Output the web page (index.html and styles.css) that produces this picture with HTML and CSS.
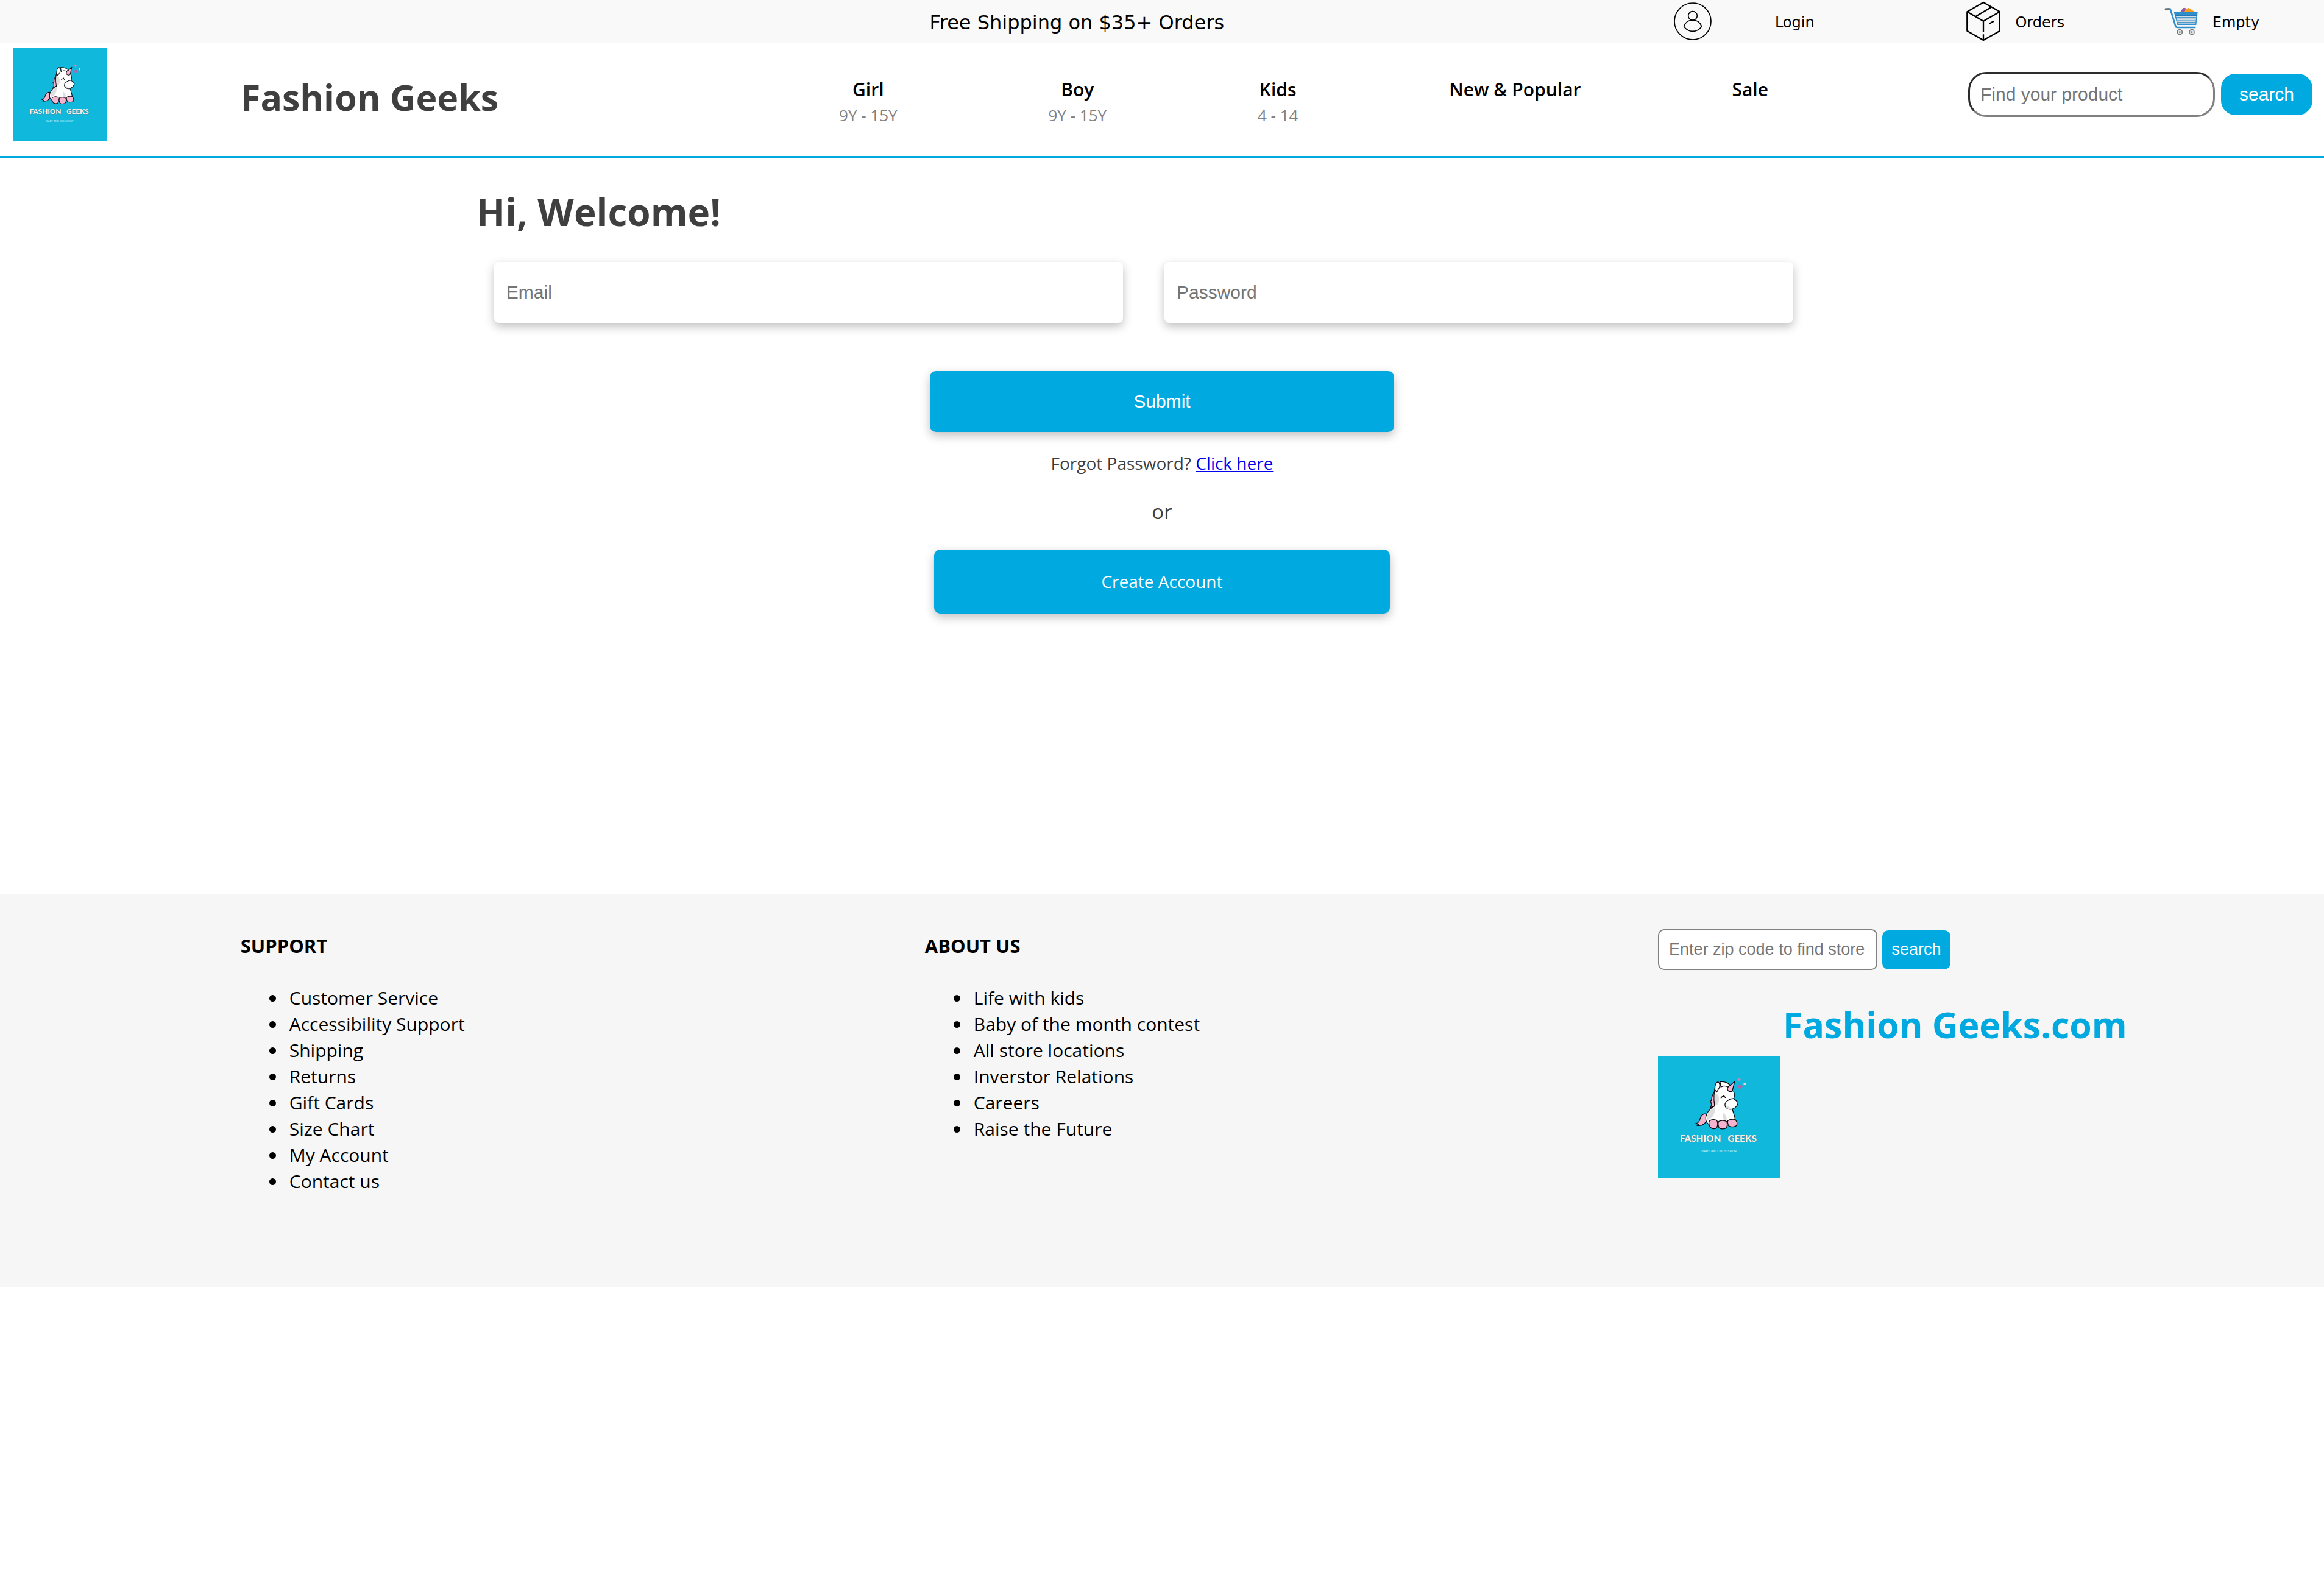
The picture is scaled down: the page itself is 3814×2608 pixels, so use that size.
FILE: index.html
```html
<!DOCTYPE html>
<html lang="en">
<head>
<meta charset="utf-8">
<meta name="viewport" content="width=device-width, initial-scale=1">
<title>Fashion Geeks</title>
<link rel="stylesheet" href="styles.css">
</head>
<body>
<header>
  <div class="topbar">
    <p class="promo">Free Shipping on $35+ Orders</p>
    <a class="account account-login" href="#">
      <svg width="62" height="62" viewBox="37 12 186 186" fill="none" stroke="#000" stroke-width="5" aria-hidden="true">
        <circle cx="130" cy="105" r="90"/>
        <circle cx="130" cy="78" r="22"/>
        <path stroke-linejoin="round" d="M87 131C92 112 108 99 130 99C152 99 168 112 174 131C150 162 110 162 87 131Z"/>
      </svg>
      <span>Login</span>
    </a>
    <a class="account" href="#">
      <svg width="56" height="66" viewBox="34 6 168 198" fill="none" stroke="#000" stroke-width="7" stroke-linejoin="round" aria-hidden="true">
        <path d="M118 12L199 58V152L118 198L38 152V58Z"/>
        <path d="M38 58L118 104L199 58M118 104V157M118 169V198M157 35L79 82"/>
        <path d="M147 117L169 104"/>
      </svg>
      <span>Orders</span>
    </a>
    <a class="account" href="#">
      <svg width="55" height="46" viewBox="1006 36 165 138" aria-hidden="true">
        <path fill="#935ba6" d="M1082 62L1096 42Q1104 35 1112 42L1106 62Z"/>
        <path fill="#f59c1f" d="M1100 62L1118 42Q1124 36 1131 42L1162 62Z"/>
        <path fill="#2f8fcd" d="M1053 60H1170L1163 123H1070Z"/>
        <path fill="#2377b3" d="M1058 72H1169L1168 78H1060Z"/>
        <path fill="#d5dde3" d="M1063 80H1163L1159 116H1073Z"/>
        <path stroke="#2f8fcd" stroke-width="3" d="M1064 86H1163M1067 94H1162M1069 102H1161M1071 110H1160"/>
        <path fill="none" stroke="#2f8fcd" stroke-width="8" stroke-linejoin="round" d="M1024 44H1035L1061 128Q1063 135 1070 135H1160"/>
        <path stroke="#6b6b6b" stroke-width="9" stroke-linecap="round" d="M1012 44H1024"/>
        <g fill="#e4e4e4" stroke="#777" stroke-width="5"><circle cx="1082" cy="158" r="12"/><circle cx="1141" cy="158" r="12"/></g>
        <g fill="#2f8fcd"><circle cx="1082" cy="158" r="4"/><circle cx="1141" cy="158" r="4"/></g>
      </svg>
      <span>Empty</span>
    </a>
  </div>

  <div class="masthead">
    <a class="masthead-logo" href="#" aria-label="Home">
      <svg viewBox="64 38 601 601">
        <g id="logo">
          <rect x="64" y="38" width="601" height="601" fill="#10b8db"/>
          <g stroke="#0b0b0f" stroke-width="4" stroke-linejoin="round" stroke-linecap="round">
            <path fill="#f6b3d0" d="M344 212C332 232 324 248 329 258L321 262C330 272 330 282 322 294L350 282Z"/>
            <path fill="#f6b3d0" d="M300 324C282 322 274 338 271 350C268 364 262 370 250 371L264 376L256 381C280 384 294 378 303 358Z"/>
            <path fill="#fff" d="M346 284C312 300 296 332 300 354C302 366 308 372 318 378L440 380C452 368 444 340 430 300L420 270Z"/>
            <path fill="#fff" stroke="none" d="M346 290C338 250 342 210 349 190L372 186C390 176 414 184 428 202C440 218 440 236 438 250C456 258 462 266 458 272C450 290 436 303 420 302C404 300 396 292 394 280L380 300Z"/>
            <path fill="none" d="M343 285C338 250 340 210 347 190"/>
            <path fill="#fff" d="M370 166C388 164 402 166 418 180L410 192C396 184 386 184 374 192Z"/>
            <path fill="#fff" d="M345 205C343 185 350 168 360 166C370 172 372 190 362 202L353 217Z"/>
            <path fill="#f6b3d0" d="M407 204C404 194 412 188 420 184L442 164L430 213C420 216 410 214 407 204Z"/>
            <path fill="none" d="M437 212C442 226 441 238 438 248"/>
            <path fill="#fff" d="M436 248L458 266C460 280 444 300 422 302C408 302 394 292 394 280C394 266 412 250 436 248Z"/>
            <path fill="none" stroke-width="5" d="M375 245C380 236 390 234 396 243M385 238L390 234"/>
          </g>
          <g fill="#dedede">
            <path d="M344 222C360 224 368 240 364 262C360 278 352 284 346 282C342 262 342 240 344 222Z"/>
            <path d="M345 290C348 316 338 344 308 356C298 340 314 306 345 290Z"/>
            <path d="M386 320C400 330 406 342 401 356L388 354C384 342 384 330 386 320Z"/>
            <path d="M397 282C406 286 416 284 422 300C410 302 400 296 397 282Z"/>
          </g>
          <g fill="#f6b3d0" stroke="#0b0b0f" stroke-width="4">
            <path d="M315 362C324 350 350 350 356 360C360 374 358 390 350 395C340 399 326 397 320 388C316 380 314 370 315 362Z"/>
            <path d="M362 362C372 354 398 356 404 364C408 378 404 392 396 396C384 400 370 398 365 392C361 384 360 372 362 362Z"/>
            <path d="M408 358C418 350 442 348 448 356C456 366 456 378 448 384C438 390 422 390 414 384C408 376 407 366 408 358Z"/>
          </g>
          <path fill="#dc7cb8" d="M465 144Q467 153 475 155Q467 157 465 166Q463 157 454 155Q463 153 465 144Z"/>
          <path fill="#f6cfe0" d="M492 166Q494 174 500 176Q494 178 492 186Q490 178 484 176Q490 174 492 166Z"/>
          <path fill="#a86cae" d="M467 172Q471 187 485 190Q471 193 467 208Q463 193 450 190Q463 187 467 172Z"/>
          <g class="logo-name">
            <text x="172" y="462">FASHION</text>
            <text x="408" y="462">GEEKS</text>
          </g>
          <text class="logo-tag" x="365" y="513" text-anchor="middle">BABY AND KIDS SHOP</text>
        </g>
      </svg>
    </a>
    <p class="brand">Fashion Geeks</p>
    <nav class="menu">
      <a href="#"><b>Girl</b><small>9Y - 15Y</small></a>
      <a href="#"><b>Boy</b><small>9Y - 15Y</small></a>
      <a href="#"><b>Kids</b><small>4 - 14</small></a>
      <a href="#"><b>New &amp; Popular</b></a>
      <a href="#"><b>Sale</b></a>
    </nav>
    <form class="search">
      <input type="text" placeholder="Find your product" aria-label="Find your product">
      <button type="button">search</button>
    </form>
  </div>
</header>

<main class="login">
  <h1>Hi, Welcome!</h1>
  <form class="login-form">
    <div class="fields">
      <input type="email" placeholder="Email" aria-label="Email">
      <input type="password" placeholder="Password" aria-label="Password">
    </div>
    <button class="submit" type="button">Submit</button>
  </form>
  <p class="forgot">Forgot Password? <a href="#">Click here</a></p>
  <p class="or">or</p>
  <a class="create" href="#">Create Account</a>
</main>

<footer class="footer">
  <section class="links">
    <h2>SUPPORT</h2>
    <ul>
      <li>Customer Service</li>
      <li>Accessibility Support</li>
      <li>Shipping</li>
      <li>Returns</li>
      <li>Gift Cards</li>
      <li>Size Chart</li>
      <li>My Account</li>
      <li>Contact us</li>
    </ul>
  </section>
  <section class="links">
    <h2>ABOUT US</h2>
    <ul>
      <li>Life with kids</li>
      <li>Baby of the month contest</li>
      <li>All store locations</li>
      <li>Inverstor Relations</li>
      <li>Careers</li>
      <li>Raise the Future</li>
    </ul>
  </section>
  <section class="store">
    <form class="zip">
      <input type="text" placeholder="Enter zip code to find store" aria-label="Enter zip code to find store">
      <button type="button">search</button>
    </form>
    <p class="site">Fashion Geeks.com</p>
    <svg class="footer-logo" viewBox="64 38 601 601" role="img" aria-label="Fashion Geeks logo"><use href="#logo"/></svg>
  </section>
</footer>
</body>
</html>
```
FILE: styles.css
```css
* { box-sizing: border-box; }

body {
  margin: 0;
  background: #fff;
  color: #000;
  font-family: "Open Sans", "Noto Sans", sans-serif;
}

h1, h2, p, ul { margin: 0; }
a { color: inherit; text-decoration: none; }
svg { display: block; }
input, button { font-family: "Liberation Sans", Arial, sans-serif; }
input::placeholder { color: #757575; }

button {
  border: 0;
  padding: 0;
  background: #00a9e0;
  color: #fff;
}

.logo-name {
  font: 900 46px Lato, sans-serif;
  fill: #fdeee0;
  filter: drop-shadow(2px 3px 0 #4f8fa8);
}
.logo-tag { font: 16px "DejaVu Sans", sans-serif; fill: #d5f1f5; }

/* Top bar */
.topbar {
  display: grid;
  grid-template-columns: 610fr 240fr 162fr 131fr;
  align-items: center;
  height: 70px;
  padding-left: 40%;
  background: #f9f9f9;
  font-family: "DejaVu Sans", Verdana, sans-serif;
}
.promo { padding-top: 4px; font-size: 32px; }
.account {
  display: flex;
  align-items: center;
  gap: 24px;
  font-size: 24px;
}
.account span { padding-top: 4px; }
.account-login { gap: 104px; }

/* Masthead */
.masthead {
  display: flex;
  align-items: center;
  padding: 8px 19px 24px 21px;
  border-bottom: 3px solid #00a9e0;
}
.masthead-logo svg { width: 154px; height: 154px; }
.brand {
  margin-left: 220px;
  padding-top: 8px;
  color: #3f3f3f;
  font-size: 59px;
  font-weight: 700;
  line-height: 80px;
}
.menu {
  display: flex;
  align-items: flex-start;
  gap: 6.5vw;
  margin-left: auto;
  padding-top: 24px;
  text-align: center;
}
.menu b {
  display: block;
  font-size: 30px;
  font-weight: 600;
  line-height: 44px;
}
.menu small {
  display: block;
  color: #808080;
  font-size: 26px;
  line-height: 40px;
}
.search {
  display: flex;
  align-items: center;
  gap: 10px;
  margin-left: 8.6vw;
}
.search input {
  width: 405px;
  height: 74px;
  padding: 0 17px;
  border: 3px solid #808080;
  border-top-color: #2c2c2c;
  border-left-color: #2c2c2c;
  border-radius: 30px;
  font-size: 30px;
}
.search button {
  width: 150px;
  height: 68px;
  border-radius: 24px;
  font-size: 30px;
}

/* Login */
.login {
  display: flex;
  flex-direction: column;
  align-items: center;
  width: 60%;
  margin: 0 auto;
  padding: 48px 0 460px;
  color: #3f3f3f;
}
.login h1 {
  align-self: flex-start;
  padding-left: 19px;
  font-size: 62px;
  font-weight: 700;
  line-height: 80px;
}
.login-form {
  display: flex;
  flex-direction: column;
  align-items: center;
  gap: 79px;
  width: 100%;
  margin-top: 43px;
}
.fields {
  display: flex;
  gap: 68px;
  width: 100%;
  padding: 0 108px 0 48px;
}
.fields input {
  flex: 1;
  min-width: 0;
  height: 100px;
  padding: 0 20px;
  border: 0;
  border-radius: 8px;
  font-size: 30px;
}
.fields input, .submit, .create { box-shadow: 0 6px 16px rgba(0, 0, 0, 0.25); }
.submit {
  width: 20vw;
  height: 100px;
  border-radius: 10px;
  font-size: 30px;
}
.forgot {
  margin-top: 31px;
  font-size: 28px;
  line-height: 40px;
}
.forgot a { color: #00e; text-decoration: underline; }
.or {
  margin-top: 38px;
  font-size: 33px;
  line-height: 44px;
}
.create {
  width: 19.6vw;
  margin-top: 40px;
  border-radius: 10px;
  background: #00a9e0;
  color: #fff;
  font-size: 28px;
  line-height: 105px;
  text-align: center;
}

/* Footer */
.footer {
  display: grid;
  grid-template-columns: 112fr 120fr 109fr;
  padding: 58px 0 153px 10.35%;
  background: #f6f6f6;
}
.links { padding-top: 6px; }
.links h2 {
  font-size: 31px;
  font-weight: 700;
  line-height: 42px;
}
.links ul {
  margin-top: 43px;
  padding-left: 75px;
  font-size: 30px;
  line-height: 43px;
}
.links li { padding-left: 5px; }
.zip {
  display: flex;
  align-items: center;
  gap: 8px;
}
.zip input {
  width: 360px;
  height: 67px;
  padding: 0 16px;
  border: 2px solid #808080;
  border-radius: 10px;
  font-size: 27px;
}
.zip button {
  width: 112px;
  height: 64px;
  border-radius: 10px;
  font-size: 27px;
}
.site {
  margin-top: 49px;
  padding-left: 205px;
  color: #00a9e0;
  font-size: 59px;
  font-weight: 700;
  line-height: 80px;
}
.footer-logo { width: 200px; height: 200px; margin-top: 12px; }
```
